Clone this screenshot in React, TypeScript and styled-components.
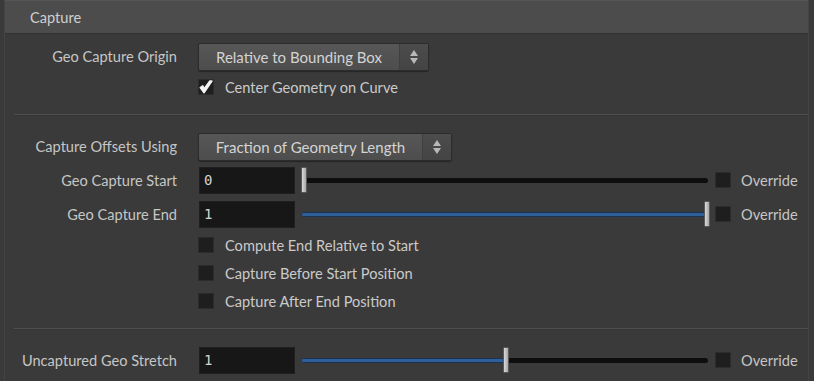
import React from 'react';
import styled, { createGlobalStyle } from 'styled-components';

const GlobalStyle = createGlobalStyle`
	html, body {
		margin: 0;
		padding: 0;
		background: #3a3a3a;
	}
	body {
		font-family: Lato, 'Open Sans', sans-serif;
		font-size: 14.6px;
		color: #c9c9c9;
	}
`;

type SliderParm = {
	label: string;
	value: string;
	fraction: number;
};

const Panel = styled.div`
	width: 814px;
	height: 381px;
	overflow: hidden;
	background: #3a3a3a;
	box-sizing: border-box;
	padding-left: 4px;
	padding-right: 5px;
`;

const Frame = styled.div`
	height: 100%;
	border-left: 1px solid #444444;
	border-right: 1px solid #444444;
`;

const Header = styled.div`
	display: flex;
	align-items: center;
	padding-left: 25px;
	background: #4c4c4c;
	border-top: 1px solid #555555;
	border-bottom: 1px solid #333333;
	box-sizing: border-box;
	height: 34px;
	color: #cfcfcf;
	font-size: 14.6px;
`;

const Section = styled.div<{ $top: number; $bottom: number }>`
	display: flex;
	flex-direction: column;
	padding-top: ${(p) => p.$top}px;
	padding-bottom: ${(p) => p.$bottom}px;
`;

const Separator = styled.div`
	height: 1px;
	margin-left: 9px;
	background: #4f4f4f;
	border-bottom: 1px solid #353535;
`;

const Row = styled.div<{ $h: number }>`
	display: flex;
	align-items: center;
	height: ${(p) => p.$h}px;
`;

const Label = styled.div`
	width: 172px;
	margin-right: 21px;
	text-align: right;
	white-space: nowrap;
	color: #c6c6c6;
`;

const Spacer = styled.div`
	width: 193px;
	flex: none;
`;

const Dropdown = styled.div<{ $w: number }>`
	width: ${(p) => p.$w}px;
	height: 28px;
	box-sizing: border-box;
	display: flex;
	border: 1px solid #2c2c2c;
	border-radius: 2px;
	background: linear-gradient(#575757, #4d4d4d);
	box-shadow: 0 1px 1px rgba(0, 0, 0, 0.35);
`;

const DropdownText = styled.div`
	flex: 1;
	display: flex;
	align-items: center;
	justify-content: center;
	color: #d4d4d4;
	font-size: 15px;
`;

const DropdownArrows = styled.div`
	width: 28px;
	display: flex;
	align-items: center;
	justify-content: center;
	background: linear-gradient(#4c4c4c, #444444);
	border-left: 1px solid #404040;
`;

const Check = styled.div`
	width: 16px;
	height: 16px;
	box-sizing: border-box;
	flex: none;
	background: #1e1e1e;
	border: 1px solid #2c2c2c;
	display: flex;
	align-items: center;
	justify-content: center;
`;

const ToggleLabel = styled.span`
	margin-left: 11px;
	color: #cacaca;
	white-space: nowrap;
`;

const Field = styled.div`
	width: 96px;
	height: 27px;
	box-sizing: border-box;
	flex: none;
	margin-left: 1px;
	padding-left: 4px;
	display: flex;
	align-items: center;
	background: #171717;
	border: 1px solid #1f1f1f;
	font-family: 'DejaVu Sans Mono', monospace;
	font-size: 14px;
	color: #d4d4d4;
`;

const SliderBox = styled.div`
	position: relative;
	width: 406px;
	height: 28px;
	margin-left: 7px;
	flex: none;
`;

const Track = styled.div`
	position: absolute;
	left: 0;
	right: 0;
	top: 12px;
	height: 5px;
	border-radius: 3px;
	background: #0e0e0e;
	overflow: hidden;
`;

const Fill = styled.div`
	height: 100%;
	background: #2e5f98;
	border-top: 1px solid #1a3352;
	border-bottom: 1px solid #1a3352;
	box-sizing: border-box;
`;

const Handle = styled.div`
	position: absolute;
	top: 1px;
	width: 6px;
	height: 26px;
	box-sizing: border-box;
	margin-left: -1px;
	border: 1px solid #5a5a5a;
	border-radius: 1px;
	background: linear-gradient(90deg, #d8d8d8, #a8a8a8);
`;

const Override = styled.div`
	display: flex;
	align-items: center;
	margin-left: 7px;
`;

const OverrideLabel = styled.span`
	margin-left: 10px;
	color: #c6c6c6;
`;

const Arrows = () => (
	<svg width="10" height="16" viewBox="0 0 10 16">
		<path d="M5 1 L9 7 L1 7 Z" fill="#b8b8b8" />
		<path d="M5 15 L9 9 L1 9 Z" fill="#b8b8b8" />
	</svg>
);

const Tick = () => (
	<svg width="14" height="14" viewBox="0 0 14 14">
		<path
			d="M1.2 7.5 L5 12.8 L13 1 L10.8 1 L5 8.8 L3.8 5.8 Z"
			fill="#f4f4f4"
			stroke="#f4f4f4"
			strokeWidth="1.4"
			strokeLinejoin="round"
		/>
	</svg>
);

const Toggle = ({ label, checked }: { label: string; checked?: boolean }) => (
	<Row $h={28}>
		<Spacer />
		<Check>{checked && <Tick />}</Check>
		<ToggleLabel>{label}</ToggleLabel>
	</Row>
);

const Slider = ({ label, value, fraction }: SliderParm) => {
	const pos = Math.round(fraction * 403);
	return (
		<Row $h={34}>
			<Label>{label}</Label>
			<Field>{value}</Field>
			<SliderBox>
				<Track>
					<Fill style={{ width: pos }} />
				</Track>
				<Handle style={{ left: pos }} />
			</SliderBox>
			<Override>
				<Check />
				<OverrideLabel>Override</OverrideLabel>
			</Override>
		</Row>
	);
};

export default function App() {
	return (
		<>
			<GlobalStyle />
			<Panel>
				<Frame>
					<Header>Capture</Header>
					<Section $top={6} $bottom={13}>
						<Row $h={33}>
							<Label>Geo Capture Origin</Label>
							<Dropdown $w={231}>
								<DropdownText>Relative to Bounding Box</DropdownText>
								<DropdownArrows>
									<Arrows />
								</DropdownArrows>
							</Dropdown>
						</Row>
						<Toggle label="Center Geometry on Curve" checked />
					</Section>
					<Separator />
					<Section $top={14} $bottom={13}>
						<Row $h={33}>
							<Label>Capture Offsets Using</Label>
							<Dropdown $w={254}>
								<DropdownText>Fraction of Geometry Length</DropdownText>
								<DropdownArrows>
									<Arrows />
								</DropdownArrows>
							</Dropdown>
						</Row>
						<Slider label="Geo Capture Start" value="0" fraction={0} />
						<Slider label="Geo Capture End" value="1" fraction={1} />
						<Toggle label="Compute End Relative to Start" />
						<Toggle label="Capture Before Start Position" />
						<Toggle label="Capture After End Position" />
					</Section>
					<Separator />
					<Section $top={13} $bottom={0}>
						<Slider label="Uncaptured Geo Stretch" value="1" fraction={0.5} />
					</Section>
				</Frame>
			</Panel>
		</>
	);
}
